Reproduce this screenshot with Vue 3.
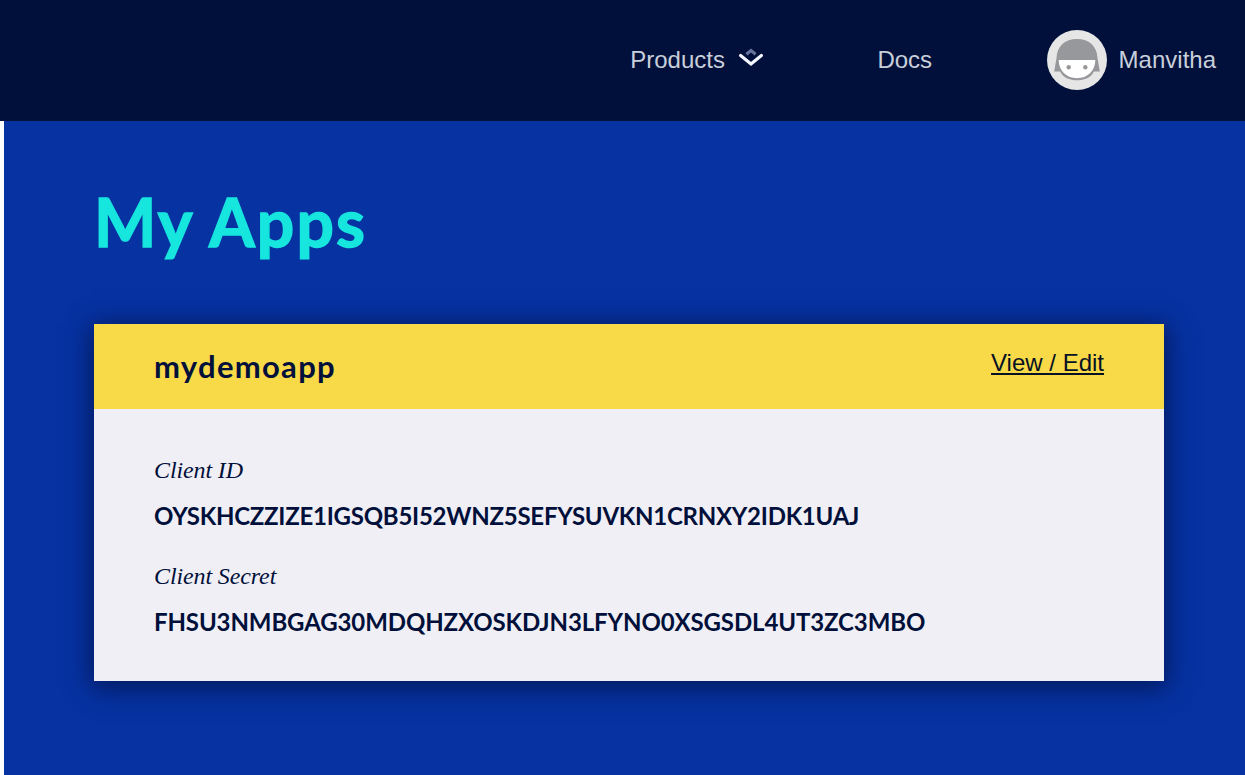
<script setup>
const credentials = [
  { label: 'Client ID', value: 'OYSKHCZZIZE1IGSQB5I52WNZ5SEFYSUVKN1CRNXY2IDK1UAJ', kind: 'id' },
  { label: 'Client Secret', value: 'FHSU3NMBGAG30MDQHZXOSKDJN3LFYNO0XSGSDL4UT3ZC3MBO', kind: 'secret' },
]
</script>

<template>
  <div class="page">
    <header class="topbar">
      <a class="nav products">
        <span>Products</span>
        <svg class="chevron" width="26" height="22" viewBox="0 0 26 22" fill="none">
          <path d="M8.400 7.200 13 3.600 17.600 7.200" stroke="#66739b" stroke-width="3.200" />
          <path d="M2.600 8.400 13 17 23.400 8.400" stroke="#f4f7ff" stroke-width="3.200" stroke-linecap="round" />
        </svg>
      </a>
      <a class="nav docs">Docs</a>
      <a class="nav user">
        <svg class="avatar" width="60" height="60" viewBox="0 0 60 60">
          <circle cx="30" cy="30" r="30" fill="#e6e6e6" />
          <path d="M9.500 28C10 16 18 9 30 9s20 7 20.500 19l2.300 13.500h-5.800C44 47.500 37.500 50.300 30 50.300s-14-2.800-17-8.800H7.200z" fill="#97989b" />
          <path d="M11.700 30h36.600c0 11-8 18.200-18.300 18.200S11.700 41 11.700 30z" fill="#fff" />
          <circle cx="21.700" cy="37.300" r="2.200" fill="#97989b" />
          <circle cx="38.300" cy="37.300" r="2.200" fill="#97989b" />
        </svg>
        <span>Manvitha</span>
      </a>
    </header>
    <main class="content">
      <h1>My Apps</h1>
      <section class="card">
        <div class="card-head">
          <h2>mydemoapp</h2>
          <a class="edit">View / Edit</a>
        </div>
        <dl class="card-body">
          <div v-for="item in credentials" :key="item.label" class="row">
            <dt>{{ item.label }}</dt>
            <dd :class="item.kind">{{ item.value }}</dd>
          </div>
        </dl>
      </section>
    </main>
  </div>
</template>

<style>
body { margin: 0; background: #fff; overflow: hidden; }
</style>

<style scoped>
.page { height: 775px; display: flex; flex-direction: column; overflow: hidden; }
.topbar {
  height: 121px; flex: none; box-sizing: border-box; padding: 0 29px 1px 0;
  display: flex; align-items: center; justify-content: flex-end;
  background: #00103a; color: #c9cfda;
  font: 24px/30px "Liberation Sans", Arial, sans-serif;
}
.nav { display: flex; align-items: center; white-space: nowrap; }
.products { margin-right: 113.5px; }
.chevron { margin-left: 13px; margin-top: -4px; }
.docs { margin-right: 114.5px; }
.avatar { margin-right: 12px; }
.content { flex: 1; margin-left: 4px; padding: 0 81px 0 90px; background: #0632a2; }
h1 {
  margin: 61px 0 0; padding-bottom: 62px; height: 80px;
  font: 700 66px/80px Lato, sans-serif; letter-spacing: 2.1px; color: #16e6de; white-space: nowrap;
  -webkit-text-stroke: 1.4px #16e6de;
}
.card { width: 1070px; background: #f0eff5; color: #00103a; box-shadow: 0 4px 24px 3px rgba(0, 9, 40, .58); }
.card-head {
  height: 85px; box-sizing: border-box; padding: 0 60px; background: #f8d948;
  display: flex; justify-content: space-between; align-items: flex-start;
}
h2 { margin: 22px 0 0; font: 700 31px/40px Lato, sans-serif; letter-spacing: 1.3px; }
.edit {
  margin-top: 24px; font: 24px/30px "Liberation Sans", Arial, sans-serif; color: #061125;
  text-decoration: underline; text-decoration-thickness: 2px; text-underline-offset: 2px;
}
.card-body { height: 272px; box-sizing: border-box; margin: 0; padding: 46px 60px 0; }
.row { height: 106px; white-space: nowrap; }
dt { font: italic 24px/30px "Liberation Serif", serif; letter-spacing: -.12px; }
dd { margin: 15px 0 0; font: 700 24px/32px Lato, sans-serif; }
.id { letter-spacing: -.25px; }
.secret { letter-spacing: -.11px; }
</style>
